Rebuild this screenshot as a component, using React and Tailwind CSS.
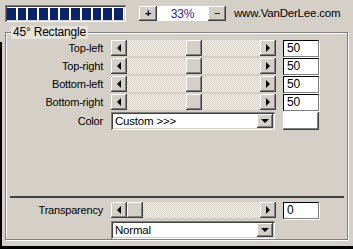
import React from 'react'

const raised = 'bg-[#d4d0c8] shadow-[inset_-1px_-1px_#404040,inset_1px_1px_#fff,inset_-2px_-2px_#808080]'
const sunken = 'bg-white shadow-[inset_1px_1px_#808080,inset_-1px_-1px_#fff,inset_2px_2px_#404040,inset_-2px_-2px_#d4d0c8]'

const rows = [
  { label: 'Top-left', value: 50 },
  { label: 'Top-right', value: 50 },
  { label: 'Bottom-left', value: 50 },
  { label: 'Bottom-right', value: 50 },
]

function Arrow({ dir }) {
  const pts = dir === 'left' ? '5,0 5,8 1,4' : dir === 'right' ? '1,0 1,8 5,4' : '0,1 8,1 4,5'
  const w = dir === 'down' ? 8 : 6
  const h = dir === 'down' ? 6 : 8
  return (
    <svg width={w} height={h} viewBox={`0 0 ${w} ${h}`}>
      <polygon points={pts} fill="#000" />
    </svg>
  )
}

function Slider({ value }) {
  const track = 133
  const offset = Math.round(((track - 16) * value) / 100)
  return (
    <div className="flex h-4 w-[165px]">
      <div className={`flex h-4 w-4 items-center justify-center ${raised}`}><Arrow dir="left" /></div>
      <div className="flex h-4 flex-1 bg-[repeating-conic-gradient(#d4d0c8_0_25%,#f4f3f0_0_50%)] bg-[length:2px_2px]">
        <div style={{ width: offset }} />
        <div className={`h-4 w-4 ${raised}`} />
      </div>
      <div className={`flex h-4 w-4 items-center justify-center ${raised}`}><Arrow dir="right" /></div>
    </div>
  )
}

function NumBox({ value }) {
  return (
    <div className="flex h-[17px] w-[36px] items-center border border-black border-r-[#808080] border-b-[#808080] bg-white pl-[3px] text-[12px] shadow-[1px_1px_#fff]">
      {value}
    </div>
  )
}

function Dropdown({ text }) {
  return (
    <div className={`flex h-[18px] w-[164px] items-center p-[2px] ${sunken}`}>
      <span className="flex-1 pl-[2px] text-[11.5px]">{text}</span>
      <div className={`flex h-[14px] w-4 items-center justify-center ${raised}`}><Arrow dir="down" /></div>
    </div>
  )
}

export default function App() {
  return (
    <div className="relative h-[249px] w-[353px] overflow-hidden bg-[#d4d0c8] font-['Liberation_Sans',Arial,sans-serif] text-[11px] tracking-[-0.2px] text-black">
      <div className="absolute bottom-0 left-0 top-[42px] w-[2px] bg-black" />
      <div className="absolute bottom-0 left-0 h-[3px] w-full bg-black" />

      <div className="flex items-center pl-[5px] pt-[5px]">
        <div className={`flex h-[17px] w-[121px] items-center gap-[2px] pl-[2px] ${sunken} bg-[#d4d0c8]`}>
          {Array.from({ length: 11 }).map((_, i) => (
            <div key={i} className="h-[12px] w-[8.7px] bg-[#0a246a]" />
          ))}
        </div>
        <div className={`ml-[13px] flex h-[15px] w-[18px] items-center justify-center font-bold ${raised}`}>+</div>
        <div className="flex h-[15px] w-[51px] items-center justify-center bg-white text-[12px] text-[#1f1fa3]">33%</div>
        <div className={`flex h-[15px] w-[18px] items-center justify-center ${raised}`}>−</div>
        <span className="ml-[8px] text-[11.5px]">www.VanDerLee.com</span>
      </div>

      <fieldset className="ml-[5px] mt-[4px] h-[214px] w-[343px] border border-[#808080] shadow-[inset_1px_1px_#fff,1px_1px_#fff]">
        <legend className="ml-[5px] bg-[#e6e3dc] px-[2px] text-[12px] leading-[13px]">45° Rectangle</legend>

        <div className="mt-[1px] flex flex-col gap-[2px]">
          {rows.map((r) => (
            <div key={r.label} className="flex h-4 items-center">
              <span className="w-[97px] text-right">{r.label}</span>
              <div className="ml-[8px]"><Slider value={r.value} /></div>
              <div className="ml-[7px]"><NumBox value={r.value} /></div>
            </div>
          ))}
          <div className="flex h-[18px] items-center">
            <span className="w-[97px] text-right">Color</span>
            <div className="ml-[8px]"><Dropdown text="Custom >>>" /></div>
            <div className={`ml-[8px] h-[18px] w-[36px] bg-white shadow-[inset_-1px_-1px_#404040,inset_1px_1px_#fff,inset_-2px_-2px_#808080]`} />
          </div>
        </div>

        <div className="ml-[4px] mt-[66px] h-[2px] w-[334px] bg-[#404040]" />

        <div className="mt-[4px] flex h-4 items-center">
          <span className="w-[97px] text-right">Transparency</span>
          <div className="ml-[8px]"><Slider value={0} /></div>
          <div className="ml-[7px]"><NumBox value={0} /></div>
        </div>
        <div className="ml-[105px] mt-[3px]"><Dropdown text="Normal" /></div>
      </fieldset>
    </div>
  )
}
